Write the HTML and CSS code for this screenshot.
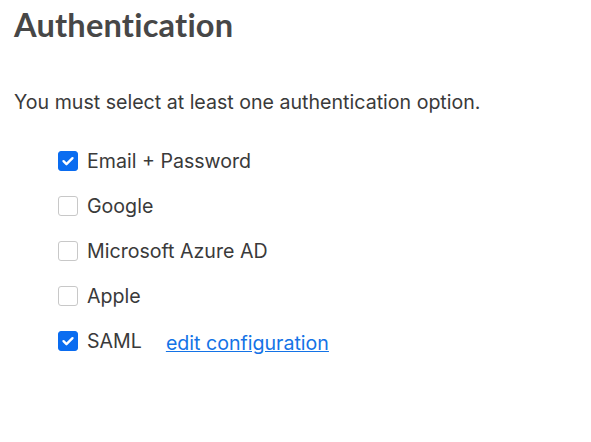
FILE: index.html
```html
<!DOCTYPE html>
<html>
<head>
<meta charset="utf-8">
<link rel="stylesheet" href="styles.css">
</head>
<body>
<div class="page">
  <h1 class="title">Authentication</h1>
  <p class="note">You must select at least one authentication option.</p>
  <ul class="options">
    <li class="option"><span class="box checked"><svg viewBox="0 0 20 20" width="20" height="20"><path d="M5 10.2l3.3 3.3L15 6.8" fill="none" stroke="#fff" stroke-width="2.6" stroke-linecap="round" stroke-linejoin="round"/></svg></span><span class="label">Email + Password</span></li>
    <li class="option"><span class="box"></span><span class="label">Google</span></li>
    <li class="option"><span class="box"></span><span class="label">Microsoft Azure AD</span></li>
    <li class="option"><span class="box"></span><span class="label">Apple</span></li>
    <li class="option"><span class="box checked"><svg viewBox="0 0 20 20" width="20" height="20"><path d="M5 10.2l3.3 3.3L15 6.8" fill="none" stroke="#fff" stroke-width="2.6" stroke-linecap="round" stroke-linejoin="round"/></svg></span><span class="label">SAML</span><a class="link" href="#">edit configuration</a></li>
  </ul>
</div>
</body>
</html>
```
FILE: styles.css
```css
html, body { margin: 0; padding: 0; background: #fff; }
.page { padding: 6px 14px; font-family: Inter, "Noto Sans", sans-serif; color: #3a3a3a; }
.title { margin: 0; font-family: Lato, sans-serif; font-weight: 700; font-size: 32.6px; line-height: 38px; color: #474747; letter-spacing: 0.2px; }
.note { margin: 46px 0 0; font-size: 19.6px; line-height: 24px; }
.options { list-style: none; margin: 35px 0 0; padding: 0 0 0 44px; display: flex; flex-direction: column; gap: 21px; }
.option { display: flex; align-items: center; height: 24px; font-size: 19.6px; }
.box { width: 18px; height: 18px; border: 1px solid #c8c8c8; border-radius: 3px; box-sizing: content-box; display: flex; margin-right: 9px; background: #fff; }
.box.checked { background: #0a6cf0; border-color: #0a6cf0; }
.box svg { width: 18px; height: 18px; }
.link { margin-left: 24px; color: #1473e6; text-decoration: underline; position: relative; top: 2px; }
```
